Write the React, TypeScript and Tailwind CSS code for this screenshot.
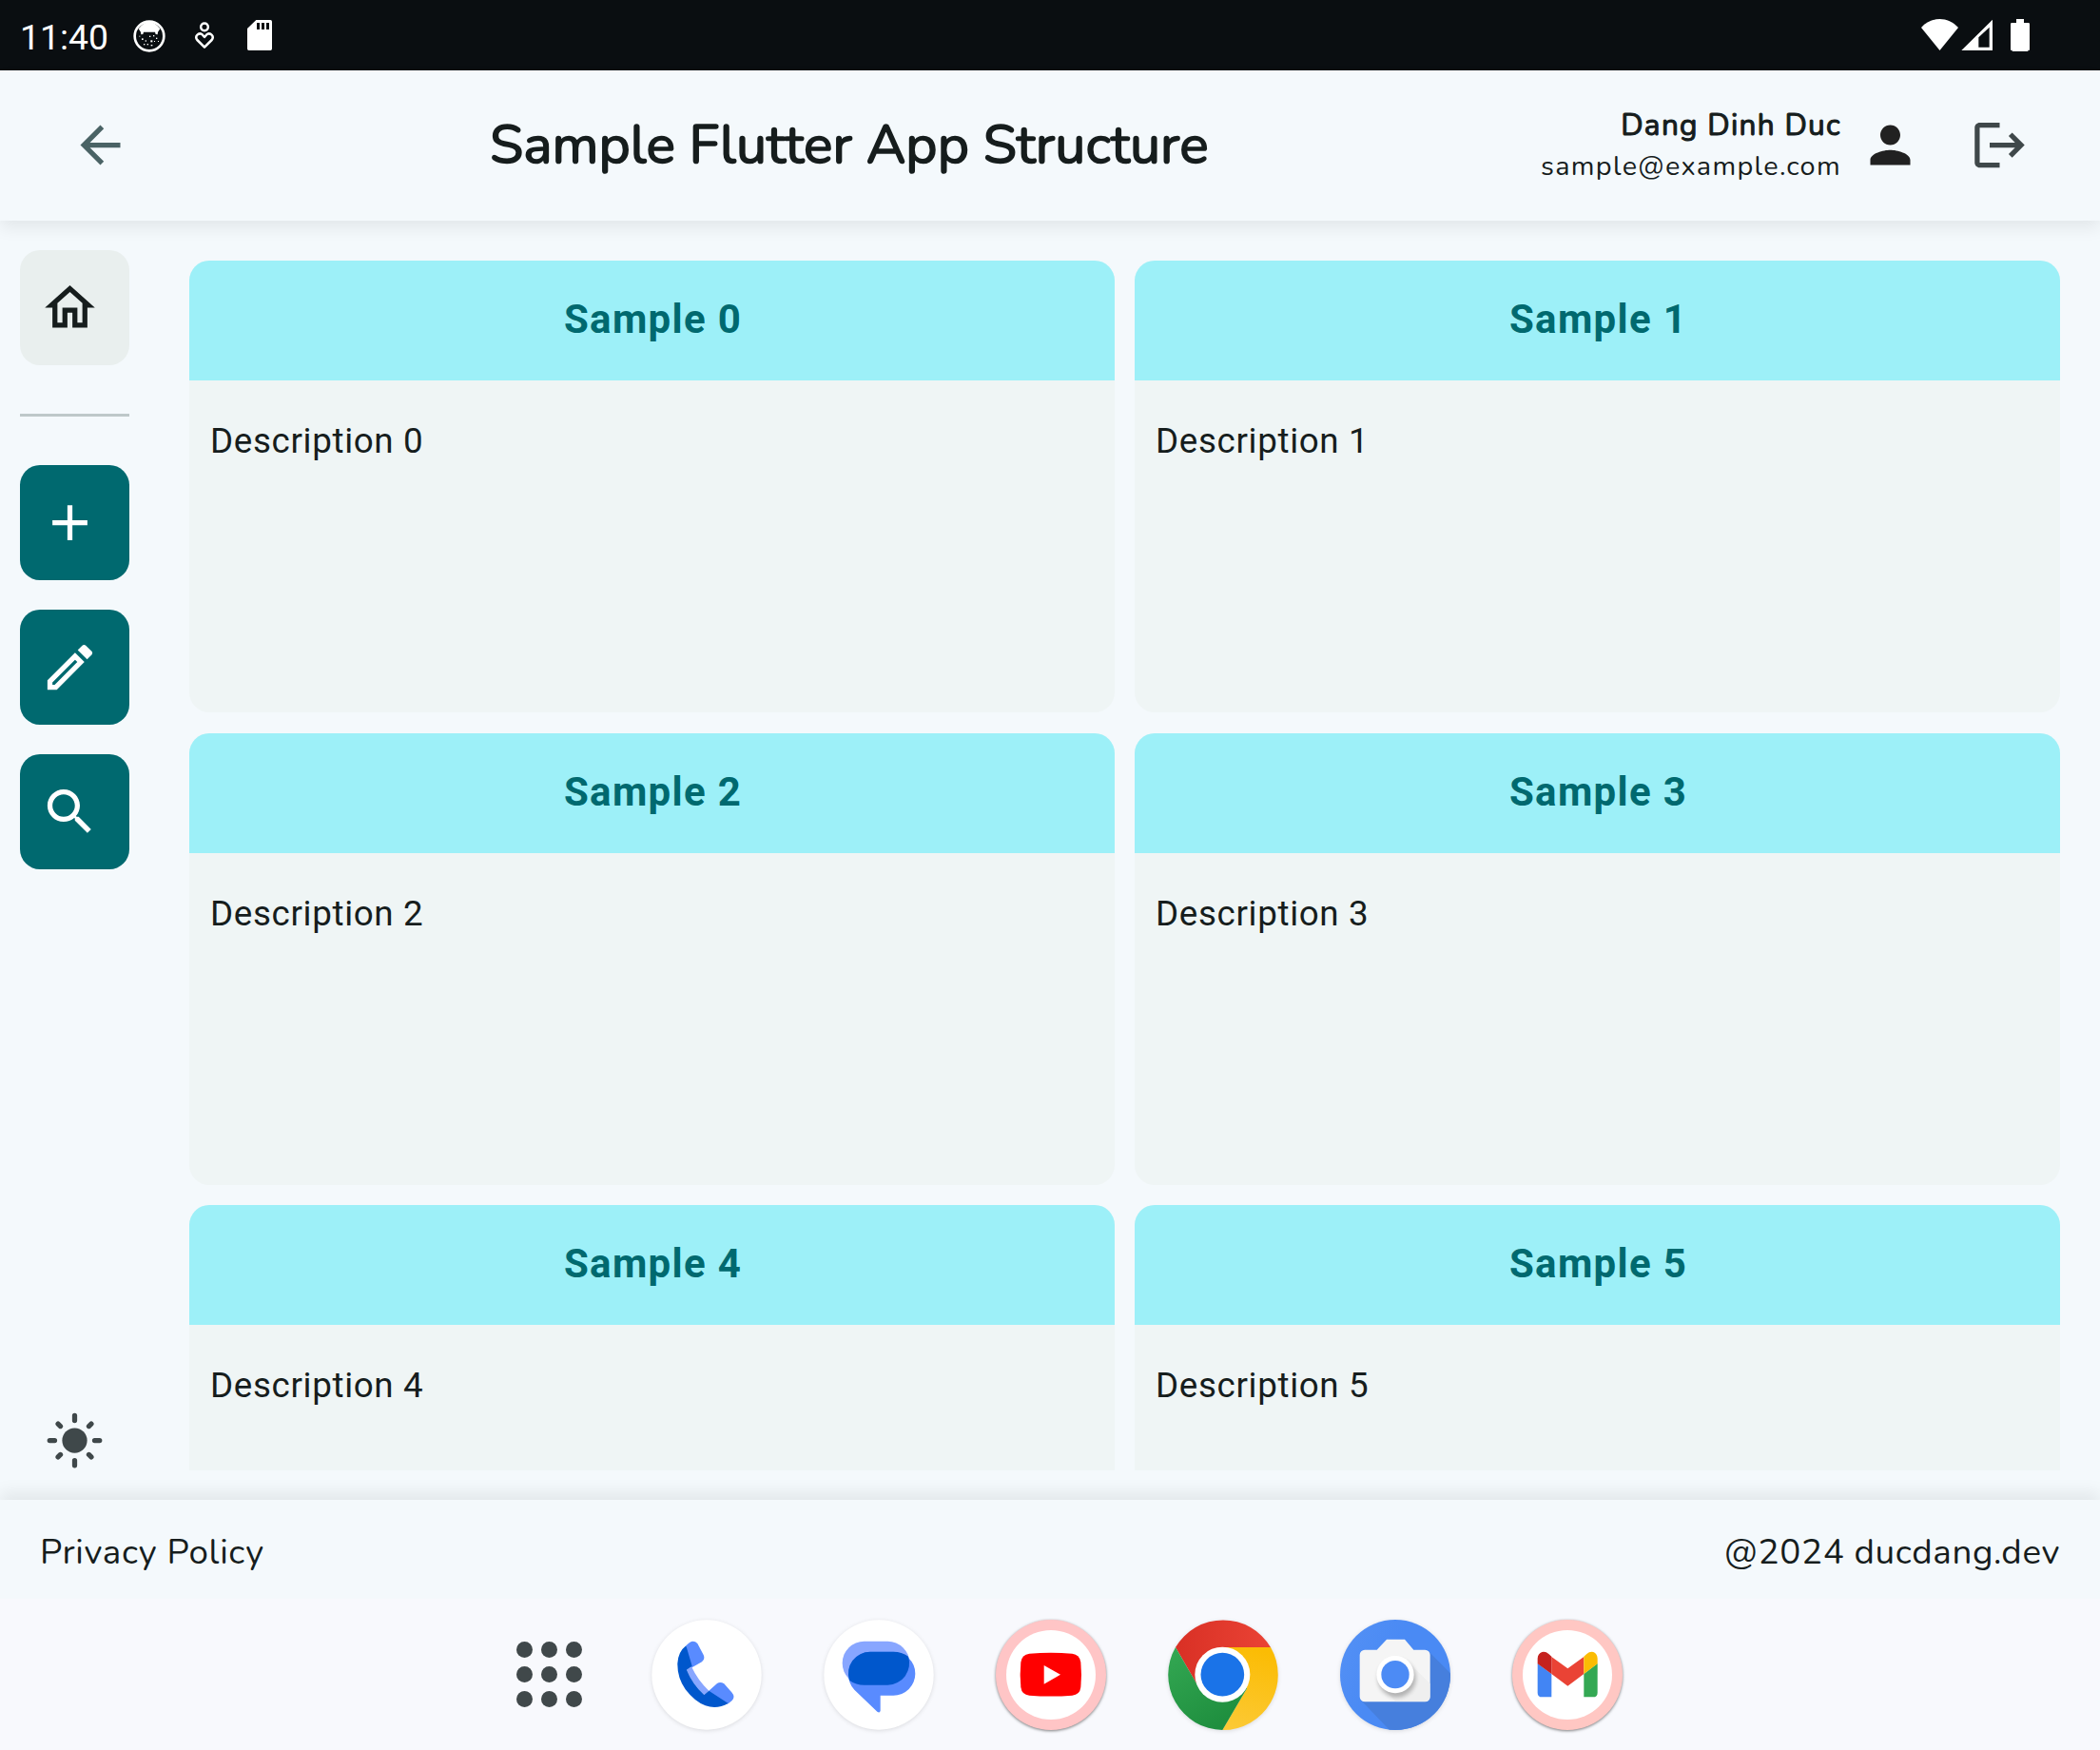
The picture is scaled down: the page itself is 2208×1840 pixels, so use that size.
import React from "react";

const samples = [0, 1, 2, 3, 4, 5];

const NUNITO = "font-[Nunito,Lato,'Open_Sans',sans-serif]";

function MIcon({ d, className }: { d: string; className: string }) {
  return (
    <svg viewBox="0 0 24 24" fill="currentColor" className={"size-[63px] shrink-0 " + className}>
      <path d={d} />
    </svg>
  );
}

const paths = {
  back: "M20 11H7.83l5.59-5.59L12 4l-8 8 8 8 1.41-1.41L7.83 13H20v-2z",
  person: "M12 12c2.21 0 4-1.79 4-4s-1.79-4-4-4-4 1.79-4 4 1.79 4 4 4zm0 2c-2.67 0-8 1.34-8 4v2h16v-2c0-2.66-5.33-4-8-4z",
  logout: "M17 7l-1.41 1.41L18.17 11H8v2h10.17l-2.58 2.58L17 17l5-5zM4 5h8V3H4c-1.1 0-2 .9-2 2v14c0 1.1.9 2 2 2h8v-2H4V5z",
  home: "M12 5.69l5 4.5V18h-2v-6H9v6H7v-7.81l5-4.5M12 3L2 12h3v8h6v-6h2v6h6v-8h3L12 3z",
  add: "M19 13h-6v6h-2v-6H5v-2h6V5h2v6h6v2z",
  edit: "M3 17.25V21h3.75L17.81 9.94l-3.75-3.75L3 17.25zM5.92 19H5v-.92l9.06-9.06.92.92L5.92 19zM20.71 5.63l-2.34-2.34c-.2-.2-.45-.29-.71-.29s-.51.1-.7.29l-1.83 1.83 3.75 3.75 1.83-1.83c.39-.39.39-1.02 0-1.41z",
  search: "M15.5 14h-.79l-.28-.27C15.41 12.59 16 11.11 16 9.5 16 5.91 13.09 3 9.5 3S3 5.91 3 9.5 5.91 16 9.5 16c1.61 0 3.09-.59 4.23-1.57l.27.28v.79l5 4.99L20.49 19l-4.99-5zm-6 0C7.01 14 5 11.99 5 9.5S7.01 5 9.5 5 14 7.01 14 9.5 11.99 14 9.5 14z",
};

function StatusBar() {
  return (
    <div className="flex h-[74px] shrink-0 items-center justify-between bg-[#0a0e11] text-white">
      <div className="flex items-center pl-[21px]">
        <span className="w-[119px] pt-[6px] font-[Roboto,sans-serif] text-[37.3px] leading-none whitespace-nowrap">11:40</span>
        <svg viewBox="0 0 102 102" className="mt-[2px] size-[34px]">
          <circle cx="51" cy="51" r="46" fill="none" stroke="#fff" strokeWidth="8" />
          <path fill="#fff" d="M17 28Q30 8 51 5Q72 8 85 28L78 38L77 46L71 45L69 38H33L31 45L25 46L24 38z" />
          <g fill="#fff">
            <rect x="27" y="58" width="5" height="5" /><rect x="51" y="50" width="4" height="4" /><rect x="63" y="48" width="4" height="4" />
            <rect x="55" y="64" width="6" height="6" /><rect x="38" y="64" width="4" height="4" /><rect x="72" y="56" width="4" height="4" />
            <rect x="44" y="75" width="4" height="4" /><rect x="33" y="75" width="4" height="4" /><rect x="56" y="78" width="5" height="4" />
            <rect x="66" y="66" width="3" height="3" /><rect x="19" y="50" width="3" height="3" /><rect x="78" y="66" width="3" height="3" />
          </g>
        </svg>
        <svg viewBox="612 68 66 90" className="mt-[1px] ml-[30px] h-[30px] w-[22px]" fill="none" stroke="#fff" strokeWidth="7.5">
          <circle cx="645" cy="87" r="11.5" />
          <path strokeLinejoin="round" d="M645 151L622 128C613 116 626 104 637 110L645 119L653 110C664 104 677 116 668 128Z" />
        </svg>
        <svg viewBox="780 66 78 96" className="ml-[34px] h-[32px] w-[26px]">
          <path fill="#fff" fillRule="evenodd" d="M808 66h45a5 5 0 0 1 5 5v86a5 5 0 0 1-5 5h-68a5 5 0 0 1-5-5V93zM810 75v21h9V75zM825 75v21h9V75zM840 75v21h9V75z" />
        </svg>
      </div>
      <svg viewBox="120 60 342 102" className="mr-[74px] h-[34px] w-[114px]">
        <g fill="#fff">
          <path d="M120 87C153 51 204 51 237 87L178.500 159z" />
          <path fillRule="evenodd" d="M345 62V159H247zM335 86L301 118V149H335z" />
          <path d="M420 60h24v12h14a4 4 0 0 1 4 4v82h-5v4h-50v-4h-5V76a4 4 0 0 1 4-4h14z" />
        </g>
      </svg>
    </div>
  );
}

function Header() {
  return (
    <header className={"relative z-10 flex h-[158px] shrink-0 items-center bg-[#f4f9fc] pb-[1px] shadow-[0_8px_16px_rgba(0,0,0,0.07)] " + NUNITO}>
      <MIcon d={paths.back} className="ml-[74px] text-[#4a6365]" />
      <h1 className="flex-1 pl-[378px] text-[#161d1d]">
        <span className="text-[57.2px] leading-none whitespace-nowrap [-webkit-text-stroke:1.6px_#161d1d]">Sample Flutter App Structure</span>
      </h1>
      <div className="flex flex-col items-end text-[#161d1d]">
        <span className="text-[31.5px] leading-[43px] tracking-[1.31px] whitespace-nowrap [-webkit-text-stroke:1.1px_#161d1d]">Dang Dinh Duc</span>
        <span className="text-[28.875px] leading-[43px] tracking-[1.31px] whitespace-nowrap">sample@example.com</span>
      </div>
      <MIcon d={paths.person} className="ml-[20px] text-[#212121]" />
      <MIcon d={paths.logout} className="mr-[74px] ml-[52px] text-[#3f484a]" />
    </header>
  );
}

function RailButton({ d, active = false }: { d: string; active?: boolean }) {
  return (
    <button className={"flex h-[121px] w-[115px] items-center rounded-[21px] pl-[21px] " + (active ? "bg-[#e9efee] text-[#161d1d]" : "bg-[#00696f] text-white")}>
      <MIcon d={d} className="" />
    </button>
  );
}

function Rail() {
  return (
    <nav className="flex w-[157px] shrink-0 flex-col pt-[31px] pl-[21px]">
      <RailButton d={paths.home} active />
      <div className="my-[51px] h-[3px] w-[115px] bg-[#bec8c9]" />
      <div className="flex flex-col gap-[31px]">
        <RailButton d={paths.add} />
        <RailButton d={paths.edit} />
        <RailButton d={paths.search} />
      </div>
      <svg viewBox="0 0 24 24" className="mt-auto mb-[31px] ml-[26px] size-[63px] text-[#3f484a]">
        <circle cx="12" cy="12" r="5" fill="currentColor" />
        <path fill="none" stroke="currentColor" strokeWidth="2" strokeLinecap="round" d="M12 2v2M12 20v2M2 12h2M20 12h2M5.350 5.350L6.300 6.300M17.700 17.700l.95.95M5.350 18.650l.95-.95M17.700 6.300l.95-.95" />
      </svg>
    </nav>
  );
}

function Card({ index }: { index: number }) {
  return (
    <article className="h-[475px] overflow-hidden rounded-[21px] bg-[#eff5f5] font-[Roboto,sans-serif]">
      <h2 className="flex h-[126px] items-center justify-center bg-[#9df0f8] pl-[2px] text-[#00696f]">
        <span className="pb-[2px] text-[42px] leading-none font-bold tracking-[1.3px]">Sample {index}</span>
      </h2>
      <p className="px-[22px] pt-[42px] text-[36.75px] leading-[43px] tracking-[0.66px] text-[#161d1d]">Description {index}</p>
    </article>
  );
}

function Footer() {
  return (
    <footer className={"relative z-10 flex h-[104px] shrink-0 items-center justify-between bg-[#f4f9fc] px-[42px] pt-[7px] text-[36.75px] leading-none tracking-[0.66px] text-[#161d1d] shadow-[0_-8px_16px_rgba(0,0,0,0.07)] " + NUNITO}>
      <span>Privacy Policy</span>
      <span>@2024 ducdang.dev</span>
    </footer>
  );
}

const disc = "size-[116px] shrink-0 overflow-visible";
const soft = " drop-shadow-[0_1px_2px_rgba(0,0,0,0.12)]";
const hard = " drop-shadow-[0_1px_1.5px_rgba(0,0,0,0.5)]";

function Dock() {
  return (
    <div className="relative z-20 flex h-[159px] shrink-0 items-center bg-[#f8f9fd] pl-[542.500px]">
      <div className="grid w-[70px] grid-cols-[repeat(3,17.5px)] gap-[8.5px]">
        {[0, 1, 2, 3, 4, 5, 6, 7, 8].map((i) => (
          <span key={i} className="size-[17.5px] rounded-full bg-[#40484a]" />
        ))}
      </div>
      <div className="ml-[72px] flex gap-[65px]">
        <svg viewBox="493 67 348 348" className={disc + soft}>
          <circle cx="667" cy="241" r="173" fill="#fff" />
          <path fill="#598bff" d="M602 149Q622 125 638 142L657 178Q663 192 652 200L618 219L604 200zM674 291L700 268Q710 261 722 269L747 297Q758 310 747 322Q738 332 726 334L690 322z" />
          <path fill="#88a6ff" d="M619 215L604 225Q622 270 659 304L674 291Q640 260 619 215z" />
          <path fill="#0057cc" d="M602 149L621 213L604 225Q622 270 659 304L674 291L735 331Q700 350 663 338Q630 326 600 287Q574 250 575 205Q577 168 602 149z" />
        </svg>
        <svg viewBox="1036 67 348 348" className={disc + soft}>
          <circle cx="1210" cy="241" r="173" fill="#fff" />
          <rect x="1095" y="135" width="212" height="138" rx="69" fill="#88a6ff" />
          <path fill="#598bff" d="M1183 168H1256A69 69 0 0 1 1256 306H1215V354Q1213 363 1205 357L1133 288Q1114 268 1114 237A69 69 0 0 1 1183 168z" />
          <path fill="#0057cc" d="M1183 168H1256Q1282 168 1303 183A69 69 0 0 1 1238 273H1164Q1138 273 1117 258A69 69 0 0 1 1183 168z" />
        </svg>
        <svg viewBox="139 67 348 348" className={disc + hard}>
          <circle cx="313" cy="241" r="174" fill="#ffc5c6" />
          <circle cx="313" cy="241" r="141" fill="#fff" />
          <path fill="#f00" d="M245 174Q313 168 380 174Q404 177 407 201Q411 241 407 280Q404 304 380 306Q313 311 245 306Q221 304 218 280Q214 241 218 201Q221 177 245 174z" />
          <path fill="#fff" d="M291 211L343 240L291 270z" />
        </svg>
        <svg viewBox="683 67 348 348" className={disc + soft}>
          <defs>
            <linearGradient id="cr" x1="0" x2="1"><stop offset="0" stopColor="#d93025" /><stop offset="1" stopColor="#ea4335" /></linearGradient>
            <linearGradient id="cg" x1="0" y1="0" x2="0.600" y2="1"><stop offset="0" stopColor="#34a853" /><stop offset="1" stopColor="#1e8e3e" /></linearGradient>
            <linearGradient id="cy" x1="0.500" y1="0" x2="0.300" y2="1"><stop offset="0" stopColor="#fbbc04" /><stop offset="1" stopColor="#fcc934" /></linearGradient>
          </defs>
          <path fill="url(#cr)" d="M707 154A174 174 0 0 1 1007 154H857L857 241L782 284z" />
          <path fill="url(#cy)" d="M857 154H1007A174 174 0 0 1 855 415L932 284L857 241z" />
          <path fill="url(#cg)" d="M707 154L782 284L857 241L932 284L855 415A174 174 0 0 1 707 154z" />
          <circle cx="855" cy="240" r="87" fill="#fff" />
          <circle cx="855" cy="240" r="68.500" fill="#1a73e8" />
        </svg>
        <svg viewBox="85 67 348 348" className={disc + soft}>
          <defs>
            <linearGradient id="cb" x1="0" x2="1" y2="0.500"><stop offset="0" stopColor="#5591f5" /><stop offset="0.500" stopColor="#4a8af4" /></linearGradient>
            <clipPath id="cc"><circle cx="259" cy="241" r="174" /></clipPath>
            <clipPath id="cbody"><rect x="147" y="162" width="222" height="164" rx="16" /></clipPath>
            <filter id="cf" x="-30%" y="-30%" width="160%" height="160%"><feGaussianBlur stdDeviation="6" /></filter>
          </defs>
          <circle cx="259" cy="241" r="174" fill="url(#cb)" />
          <path clipPath="url(#cc)" fill="#467fdd" d="M364 167L450 253V430H255L152 322z" />
          <path fill="#f5f5f5" d="M201 162L232 129H289L317 162H353A16 16 0 0 1 369 178V310A16 16 0 0 1 353 326H163A16 16 0 0 1 147 310V178A16 16 0 0 1 163 162z" />
          <g clipPath="url(#cbody)">
            <path fill="#efefef" d="M300 200L369 269V326H261L217 281z" />
            <circle cx="264" cy="252" r="60" fill="#000" opacity="0.25" filter="url(#cf)" />
          </g>
          <circle cx="259" cy="240" r="59" fill="#fff" />
          <circle cx="259" cy="240" r="44" fill="#4c8bf5" />
        </svg>
        <svg viewBox="628 67 348 348" className={disc + hard}>
          <circle cx="802" cy="241" r="174" fill="#ffc7c3" />
          <circle cx="802" cy="241" r="141" fill="#fff" />
          <path fill="#4285f4" d="M708 205L752 238V311H722Q708 311 708 297z" />
          <path fill="#34a853" d="M897 205L854 238V311H883Q897 311 897 297z" />
          <path fill="#ea4335" d="M752 184L803 221L854 184V238L803 276L752 238z" />
          <path fill="#c5221f" d="M708 206V189Q709 174 722 169Q733 166 743 175L752 183V238z" />
          <path fill="#fbbc04" d="M897 206V189Q896 174 884 169Q873 166 863 175L854 183V238z" />
        </svg>
      </div>
    </div>
  );
}

export default function App() {
  return (
    <div className="flex h-[1840px] w-[2208px] flex-col overflow-hidden bg-[#f4f9fc]">
      <StatusBar />
      <Header />
      <div className="flex min-h-0 flex-1">
        <Rail />
        <main className="mt-[42px] mr-[42px] mb-[31px] ml-[42px] grid flex-1 grid-cols-2 content-start gap-x-[21px] gap-y-[21.500px] overflow-hidden">
          {samples.map((i) => (
            <Card key={i} index={i} />
          ))}
        </main>
      </div>
      <Footer />
      <Dock />
    </div>
  );
}
